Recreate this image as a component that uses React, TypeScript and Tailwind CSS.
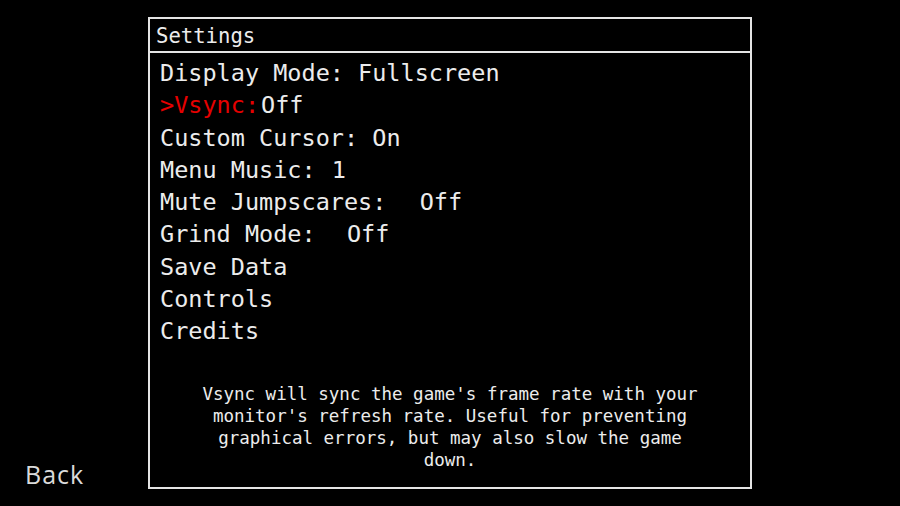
import React from 'react';

const mono = "font-['DejaVu_Sans_Mono','Liberation_Mono',monospace]";

const rows: { label: string; value?: string; active?: boolean; gap?: string }[] = [
  { label: 'Display Mode: ', value: 'Fullscreen' },
  { label: '>Vsync:', value: 'Off', active: true, gap: 'ml-[2px]' },
  { label: 'Custom Cursor: ', value: 'On' },
  { label: 'Menu Music: ', value: '1', gap: 'ml-[2px]' },
  { label: 'Mute Jumpscares:  ', value: 'Off', gap: 'ml-[5px]' },
  { label: 'Grind Mode:  ', value: 'Off', gap: 'ml-[3px]' },
  { label: 'Save Data' },
  { label: 'Controls' },
  { label: 'Credits' },
];

const App = () => {
  return (
    <div className="w-[900px] h-[506px] bg-black overflow-hidden grid grid-cols-[148px_604px_1fr] pt-[17px]">
      <div className="self-end pb-[16px] pl-[25px]">
        <span className="font-['Open_Sans',sans-serif] text-[25px] leading-none tracking-[1px] text-[#dadada]">
          Back
        </span>
      </div>

      <div className="h-[472px] border-2 border-[#e4e4e4] flex flex-col">
        <div className={`h-[34px] border-b-2 border-[#e4e4e4] flex items-center pt-[2px] pl-[6px] ${mono} text-[20.6px] text-[#ececec]`}>
          Settings
        </div>

        <div className={`flex-1 flex flex-col pt-[4px] pl-[10px] ${mono} text-[23.5px] leading-[32.25px] text-[#ececec]`}>
          {rows.map((r) => (
            <div key={r.label} className="whitespace-pre">
              <span className={r.active ? 'text-[#e60000]' : ''}>{r.label}</span>
              {r.value && <span className={r.gap ?? ''}>{r.value}</span>}
            </div>
          ))}

          <div className="mt-auto pb-[16px] pr-[10px] flex justify-center">
            <p className="w-[510px] text-center text-[17.5px] leading-[22px]">
              Vsync will sync the game's frame rate with your monitor's refresh rate. Useful for preventing graphical errors, but may also slow the game down.
            </p>
          </div>
        </div>
      </div>

      <div />
    </div>
  );
};

export default App;
